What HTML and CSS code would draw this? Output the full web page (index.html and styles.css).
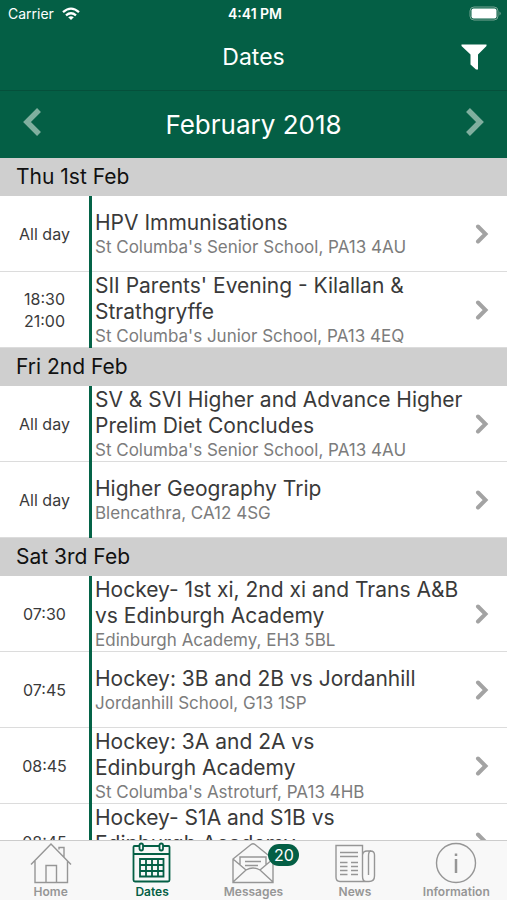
FILE: index.html
```html
<!DOCTYPE html>
<html lang="en">
<head>
<meta charset="utf-8">
<meta name="viewport" content="width=device-width, initial-scale=1">
<title>Dates</title>
<link rel="stylesheet" href="styles.css">
</head>
<body>
<svg class="defs" aria-hidden="true">
  <symbol id="chevron" viewBox="0 0 14 20"><path d="M3 2.500 L10.5 10 L3 17.500" fill="none" stroke="currentColor" stroke-width="4" stroke-linecap="round"/></symbol>
</svg>
<div class="status">
  <div class="carrier"><span>Carrier</span>
    <svg width="18" height="14" viewBox="0 0 18 14" fill="none" stroke="#fff" stroke-width="2.3" aria-hidden="true"><path d="M1 5.2Q9 -2 17 5.2M4 8.4Q9 4.2 14 8.4"/><path d="M6.2 10.2Q9 8.2 11.8 10.2L9 13Z" fill="#fff" stroke="none"/></svg>
  </div>
  <strong class="clock">4:41 PM</strong>
  <svg class="battery" width="33" height="15" viewBox="0 0 33 15" aria-hidden="true"><rect x="1" y="1" width="28" height="13" rx="4" fill="none" stroke="#76a594"/><rect x="2.500" y="2.500" width="25" height="10" rx="2" fill="#fff"/><path d="M30.500 5.500Q33 7.500 30.500 9.500Z" fill="#76a594"/></svg>
</div>
<header class="nav">
  <h1>Dates</h1>
  <button class="filter" aria-label="Filter"><svg width="26" height="26" viewBox="0 0 26 26" aria-hidden="true"><path d="M0.500 0.500H25.500V2L17 10.500V25.500H15L9.500 20.500V10.500L0.500 2Z" fill="#fff"/></svg></button>
</header>
<div class="month">
  <button aria-label="Previous month"><svg width="20" height="30" viewBox="0 0 20 30" aria-hidden="true"><path d="M17 3L5 15L17 27" fill="none" stroke="currentColor" stroke-width="5.500"/></svg></button>
  <h2>February 2018</h2>
  <button aria-label="Next month"><svg width="20" height="30" viewBox="0 0 20 30" aria-hidden="true"><path d="M3 3L15 15L3 27" fill="none" stroke="currentColor" stroke-width="5.500"/></svg></button>
</div>
<main class="agenda">
  <section>
    <h3>Thu 1st Feb</h3>
    <a class="event" href="#"><span class="time">All day</span><span class="info"><span class="title">HPV Immunisations</span><span class="place">St Columba's Senior School, PA13 4AU</span></span><svg class="chev"><use href="#chevron"/></svg></a>
    <a class="event" href="#"><span class="time">18:30<br>21:00</span><span class="info"><span class="title">SII Parents' Evening - Kilallan &amp;<br>Strathgryffe</span><span class="place">St Columba's Junior School, PA13 4EQ</span></span><svg class="chev"><use href="#chevron"/></svg></a>
  </section>
  <section>
    <h3>Fri 2nd Feb</h3>
    <a class="event" href="#"><span class="time">All day</span><span class="info"><span class="title">SV &amp; SVI Higher and Advance Higher<br>Prelim Diet Concludes</span><span class="place">St Columba's Senior School, PA13 4AU</span></span><svg class="chev"><use href="#chevron"/></svg></a>
    <a class="event" href="#"><span class="time">All day</span><span class="info"><span class="title">Higher Geography Trip</span><span class="place">Blencathra, CA12 4SG</span></span><svg class="chev"><use href="#chevron"/></svg></a>
  </section>
  <section>
    <h3>Sat 3rd Feb</h3>
    <a class="event" href="#"><span class="time">07:30</span><span class="info"><span class="title">Hockey- 1st xi, 2nd xi and Trans A&amp;B<br>vs Edinburgh Academy</span><span class="place">Edinburgh Academy, EH3 5BL</span></span><svg class="chev"><use href="#chevron"/></svg></a>
    <a class="event" href="#"><span class="time">07:45</span><span class="info"><span class="title">Hockey: 3B and 2B vs Jordanhill</span><span class="place">Jordanhill School, G13 1SP</span></span><svg class="chev"><use href="#chevron"/></svg></a>
    <a class="event" href="#"><span class="time">08:45</span><span class="info"><span class="title">Hockey: 3A and 2A vs<br>Edinburgh Academy</span><span class="place">St Columba's Astroturf, PA13 4HB</span></span><svg class="chev"><use href="#chevron"/></svg></a>
    <a class="event" href="#"><span class="time">08:45</span><span class="info"><span class="title">Hockey- S1A and S1B vs<br>Edinburgh Academy</span><span class="place">Edinburgh Academy, EH3 5BL</span></span><svg class="chev"><use href="#chevron"/></svg></a>
  </section>
</main>
<nav class="tabs">
  <a href="#"><svg width="42" height="42" viewBox="0 0 42 42" aria-hidden="true"><path d="M1 22.500L21 2L41 22.500M5 19V40.500H37.500V19M16 40V23.500H26.500V40M29 7.500V5.500H34V15"/></svg><span>Home</span></a>
  <a href="#" class="active" aria-current="page"><svg width="42" height="42" viewBox="0 0 42 42" aria-hidden="true"><path d="M8 4H3.500Q2.500 4 2.500 5V38Q2.500 39.500 4 39.500H37Q38.500 39.500 38.500 38V5Q38.500 4 37.500 4H32M12 4H28M2.500 12H38.500"/><rect x="8.500" y="1.500" width="3.500" height="7" rx="1.700"/><rect x="28.500" y="1.500" width="3.500" height="7" rx="1.700"/><path d="M9 17H32.500V34.500H9ZM15 17V34.500M21 17V34.500M27 17V34.500M9 23H32.500M9 29H32.500"/></svg><span>Dates</span></a>
  <a href="#"><svg width="42" height="42" viewBox="0 0 42 42" aria-hidden="true"><path d="M1 17L19 2.500Q21 1 23 2.500L41 17V40.500H1ZM1 17L14 28M41 17L28 28M1 40L14 28Q21 24 28 28L41 40M8 22.500V15H34V22.500M13 19.500H29M13 23.500H26"/></svg><b class="badge">20</b><span>Messages</span></a>
  <a href="#"><svg width="42" height="42" viewBox="0 0 42 42" aria-hidden="true"><path d="M28.500 34V3.500H2V35Q2 39.500 6 39.500H35Q40.500 39.500 40.500 34V13Q40.500 9 36.500 9H33Q29 9 28.500 13V34Q28.500 39.500 32 39.500M34.500 33V14Q34.500 9 37 9M6 10.500H24M6 14.500H24M6 20.500H13.500M6 24.500H13.500M6 28.500H13.500M6 32.500H13.500M17 20.500H24M17 24.500H24M17 28.500H24M17 32.500H24"/></svg><span>News</span></a>
  <a href="#"><svg width="42" height="42" viewBox="0 0 42 42" aria-hidden="true"><circle cx="21" cy="21" r="19.500"/><path d="M21 17V31M21 11.500V14" stroke-width="2.500"/></svg><span>Information</span></a>
</nav>
</body>
</html>
```
FILE: styles.css
```css
* { box-sizing: border-box; }
body {
  margin: 0;
  height: 100vh;
  display: flex;
  flex-direction: column;
  font-family: Inter, "Liberation Sans", sans-serif;
  background: #fff;
  color: #3a3a3a;
}
a { color: inherit; text-decoration: none; }
button { border: 0; padding: 0; background: none; color: inherit; display: flex; }
h1, h2, h3 { margin: 0; font-weight: 400; }
.defs { position: absolute; width: 0; height: 0; }

.status, .nav, .month { background: #045f45; color: #fff; flex: none; }
.status {
  display: grid;
  grid-template-columns: 1fr auto 1fr;
  align-items: center;
  height: 27px;
  padding: 0 5px 0 8px;
  font-size: 14px;
}
.carrier { display: flex; align-items: center; gap: 8px; }
.clock { font-weight: 600; }
.battery { justify-self: end; }
.nav {
  display: grid;
  grid-template-columns: 1fr auto 1fr;
  align-items: center;
  height: 64px;
  padding: 0 20px 4px;
  border-bottom: 1px solid #05503b;
}
.nav h1 { grid-column: 2; font-size: 23px; line-height: 28px; }
.filter { justify-self: end; }
.month {
  display: flex;
  align-items: center;
  justify-content: space-between;
  height: 67px;
  padding: 0 22px;
}
.month h2 { font-size: 26px; line-height: 32px; }
.month button { color: #80af9f; padding-bottom: 6px; }

.agenda { flex: 1; min-height: 0; overflow: hidden auto; scrollbar-width: none; }
.agenda h3 {
  height: 38px;
  padding: 0 16px;
  background: #cfcfcf;
  color: #111;
  font-size: 21px;
  line-height: 38px;
}
.event {
  display: flex;
  align-items: stretch;
  min-height: 76px;
  border-bottom: 1px solid #dcdcdc;
}
.time {
  flex: none;
  width: 92px;
  margin-bottom: -1px;
  display: grid;
  place-content: center;
  text-align: center;
  border-right: 3px solid #046347;
  font-size: 16px;
  line-height: 22px;
}
.info {
  flex: 1;
  min-width: 0;
  display: flex;
  flex-direction: column;
  justify-content: center;
  padding: 1px 0 0 3px;
  white-space: nowrap;
}
.title { font-size: 21px; line-height: 26px; }
.place { font-size: 17px; line-height: 22px; color: #7c7c7c; }
.chev { flex: none; align-self: center; width: 14px; height: 20px; margin-right: 18px; color: #a3a3a3; }

.tabs {
  flex: none;
  display: grid;
  grid-template-columns: repeat(5, 1fr);
  height: 60px;
  background: #f8f8f8;
  border-top: 1px solid #ccc;
  color: #969696;
  font-size: 12px;
  font-weight: 600;
}
.tabs a { position: relative; display: flex; flex-direction: column; align-items: center; padding-top: 1px; }
.tabs svg { fill: none; stroke: currentColor; stroke-width: 1.4; }
.tabs span { line-height: 16px; }
.tabs .active { color: #045f45; }
.tabs .active svg { stroke-width: 1.8; }
.badge {
  position: absolute;
  top: 3px;
  left: calc(50% + 15px);
  width: 31px;
  border-radius: 11px;
  background: #045f45;
  color: #fff;
  font-size: 16px;
  font-weight: 400;
  line-height: 22px;
  text-align: center;
}
```
